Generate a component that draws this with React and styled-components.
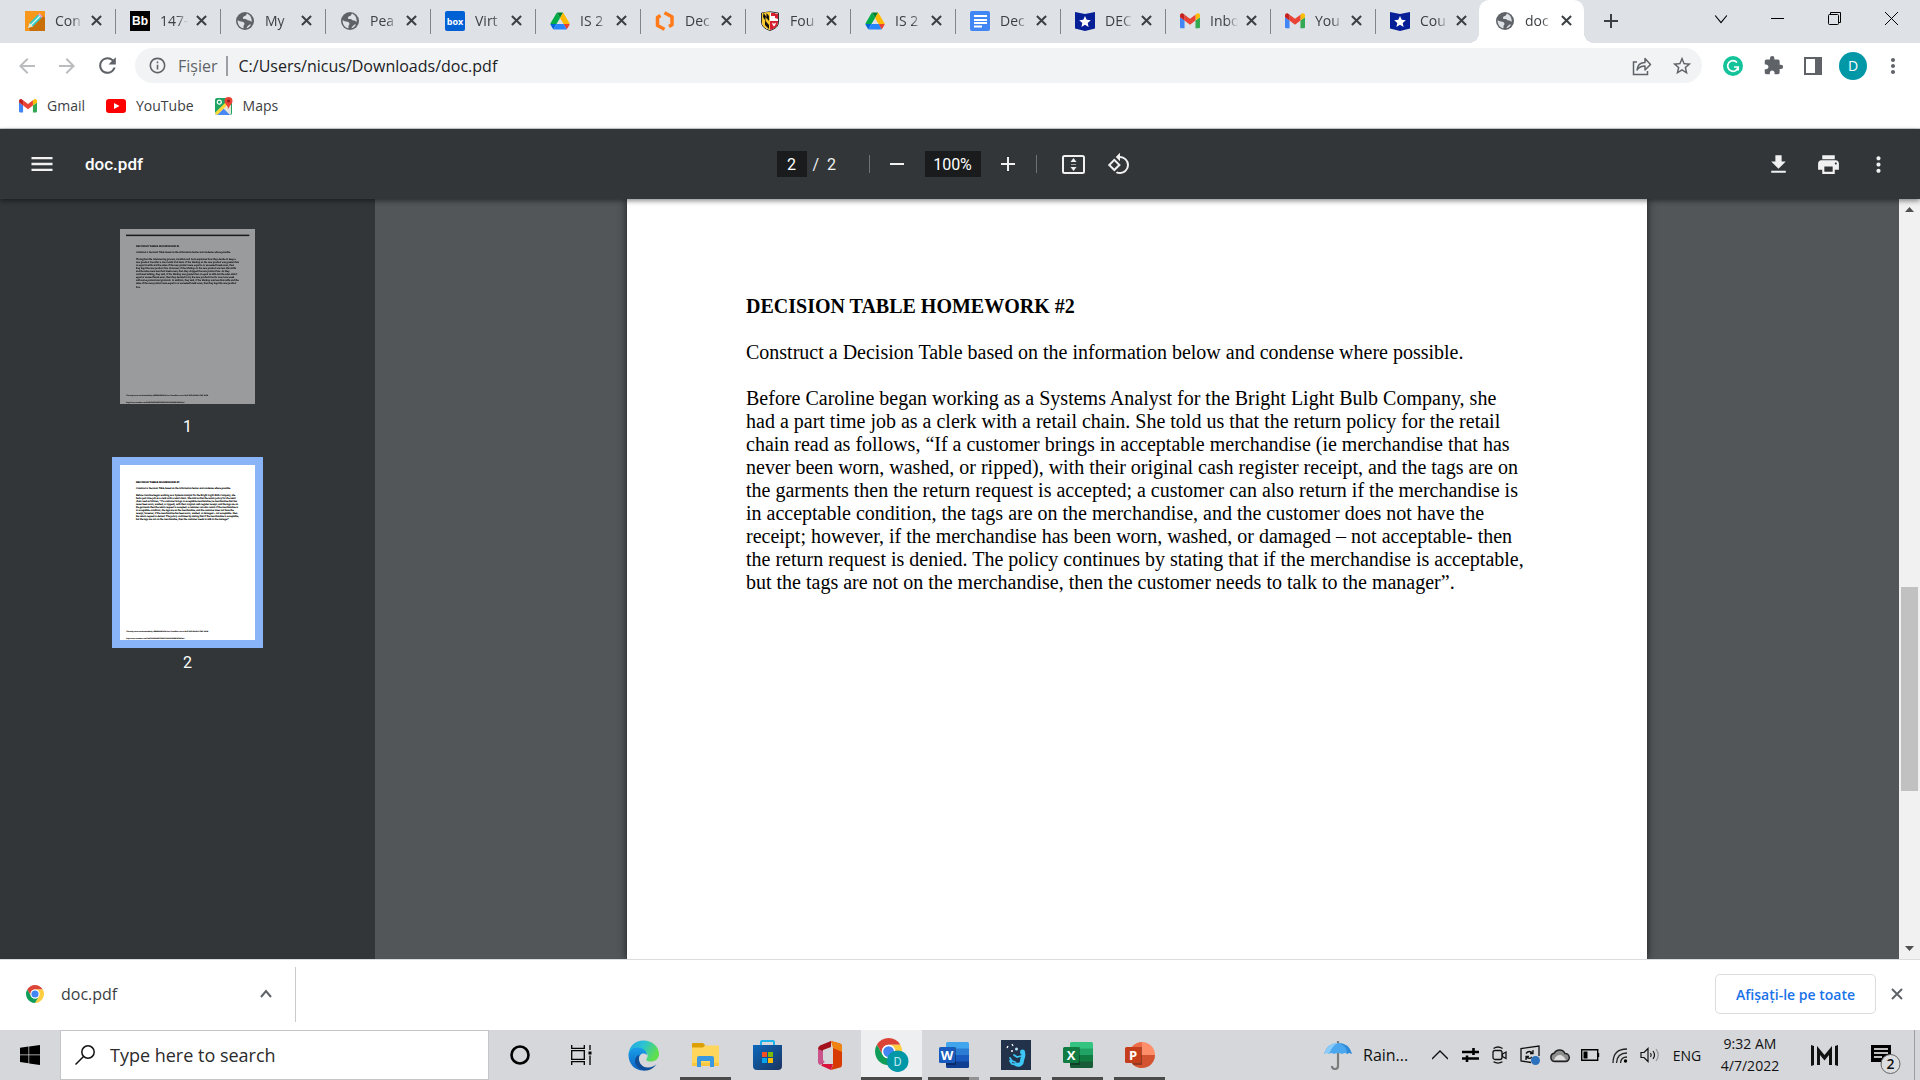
import React, { useState } from "react";
import styled, { createGlobalStyle, css } from "styled-components";
import {
    MdAdd,
    MdArrowBack,
    MdArrowForward,
    MdExtension,
    MdFileDownload,
    MdInfoOutline,
    MdMenu,
    MdMoreVert,
    MdPrint,
    MdRefresh,
    MdRemove,
    MdRotate90DegreesCcw,
    MdStarBorder,
} from "react-icons/md";

const GlobalStyle = createGlobalStyle`
    * {
        box-sizing: border-box;
    }

    body {
        margin: 0;
        font-family: "Open Sans", "Noto Sans", sans-serif;
        color: #3c4043;
    }

    button, input {
        margin: 0;
        padding: 0;
        border: 0;
        background: none;
        font: inherit;
        color: inherit;
        outline: none;
    }

    svg {
        display: block;
        flex: none;
    }
`

const Screen = styled.div`
    display: flex;
    flex-direction: column;
    height: 100vh;
    overflow: hidden;
    background: #fff;
`

/* ---------- tabs ---------- */

const TabStrip = styled.div`
    display: flex;
    height: 43px;
    padding-left: 11px;
    background: #dee1e6;
`

const Tab = styled.div`
    position: relative;
    display: flex;
    align-items: center;
    flex: 0 1 105px;
    min-width: 0;
    padding: 0 0 2px 14px;

    ${p => p.$divided && css`
        &::after {
            content: "";
            position: absolute;
            right: 0;
            top: 9px;
            width: 1px;
            height: 25px;
            background: #80868b;
        }
    `}

    ${p => p.$active && css`
        margin-left: -2px;
        padding-left: 16px;
        background: #fff;
        border-radius: 10px 10px 0 0;

        &::before, &::after {
            content: "";
            position: absolute;
            bottom: 0;
            width: 10px;
            height: 10px;
        }

        &::before {
            left: -10px;
            background: radial-gradient(circle at 0 0, transparent 10px, #fff 10px);
        }

        &::after {
            right: -10px;
            background: radial-gradient(circle at 100% 0, transparent 10px, #fff 10px);
        }
    `}
`

const TabTitle = styled.span`
    width: 28px;
    margin-left: 10px;
    overflow: hidden;
    white-space: nowrap;
    font-size: 14px;
    line-height: 20px;
    mask-image: linear-gradient(to right, #000 60%, transparent);
`

const IconButton = styled.button`
    display: flex;
    align-items: center;
    justify-content: center;
    flex: none;
    width: ${p => p.$width || 40}px;
    height: ${p => p.$height || 35}px;
    color: ${p => p.$color || "#5f6368"};
`

const Spacer = styled.div`
    flex: 1;
`

/* ---------- address and bookmarks ---------- */

const AddressBar = styled.div`
    display: flex;
    align-items: center;
    height: 45px;
    padding: 0 7px;
`

const Omnibox = styled.label`
    display: flex;
    align-items: center;
    flex: 1;
    height: 35px;
    margin: 0 11px 0 8px;
    padding-left: 13px;
    border-radius: 18px;
    background: #f1f3f4;
    font-size: 16px;
    color: #5f6368;
`

const Scheme = styled.span`
    margin-left: 11px;
    padding-right: 9px;
    border-right: 2px solid #9aa0a6;
    line-height: 20px;
`

const UrlInput = styled.input`
    flex: 1;
    padding-left: 10px;
    color: #202124;
`

const Avatar = styled.span`
    display: flex;
    align-items: center;
    justify-content: center;
    width: 28px;
    height: 28px;
    border-radius: 50%;
    background: #0097a7;
    color: #fff;
    font-size: 14px;
`

const Bookmarks = styled.nav`
    display: flex;
    align-items: center;
    gap: 21px;
    height: 41px;
    padding: 0 0 5px 19px;
    border-bottom: 1px solid #d0d0d0;
`

const Bookmark = styled.a`
    display: flex;
    align-items: center;
    gap: 10px;
    color: #3c4043;
    font-size: 14px;
    text-decoration: none;
`

/* ---------- pdf viewer ---------- */

const PdfToolbar = styled.header`
    position: relative;
    z-index: 1;
    display: grid;
    grid-template-columns: 1fr auto 1fr;
    align-items: center;
    height: 70px;
    padding: 0 17px 0 22px;
    background: #323639;
    box-shadow: 0 2px 5px rgba(0, 0, 0, 0.45);
    color: #f1f1f1;
    font-family: Roboto, sans-serif;
    font-size: 16px;
`

const ToolGroup = styled.div`
    display: flex;
    align-items: center;
    justify-content: ${p => p.$align || "flex-start"};
    padding-right: ${p => p.$end || 0}px;
`

const FileName = styled.h1`
    margin: 0 0 0 23px;
    color: #fff;
    font-size: 17px;
    font-weight: 500;
`

const ToolInput = styled.input`
    width: ${p => p.$width}px;
    height: 26px;
    background: #191b1c;
    color: #fff;
    text-align: center;
`

const PageCount = styled.span`
    width: 62px;
    padding-left: 6px;
    white-space: pre;
`

const ToolDivider = styled.span`
    width: 1px;
    height: 18px;
    margin-right: ${p => p.$gap || 0}px;
    background: #6e7275;
`

const Viewer = styled.main`
    display: flex;
    flex: 1;
    min-height: 0;
    background: #525659;
`

const Sidebar = styled.aside`
    display: flex;
    flex-direction: column;
    align-items: center;
    flex: none;
    width: 375px;
    padding-top: 22px;
    background: #323639;
    color: #fff;
    font-family: Roboto, sans-serif;
    font-size: 16px;
`

const Thumb = styled.button`
    width: 151px;
    padding: 8px;
    background: ${p => p.$selected ? "#8ab4f8" : "transparent"};

    svg {
        width: 135px;
        height: 175px;
        background: #fff;
        opacity: ${p => p.$selected ? 1 : 0.5};
    }
`

const ThumbLabel = styled.span`
    margin: 5px 0 20px;
    line-height: 20px;
`

const Canvas = styled.section`
    display: flex;
    flex: 1;
    justify-content: center;
    min-width: 0;
    overflow: hidden;
`

const Page = styled.article`
    width: 1020px;
    padding: 96px 121px 0 119px;
    background: #fff;
    box-shadow: 0 0 8px rgba(0, 0, 0, 0.7);
    color: #000;
    font-family: "Liberation Serif", serif;
    font-size: 20px;
    line-height: 23px;

    h2, p {
        margin: 0 0 23px;
        font-size: inherit;
    }
`

const Scrollbar = styled.div`
    display: flex;
    flex-direction: column;
    align-items: center;
    width: 21px;
    background: #f1f1f1;
`

const Arrow = styled.button`
    display: flex;
    align-items: center;
    justify-content: center;
    width: 21px;
    height: 21px;
`

const Track = styled.div`
    flex: ${p => p.$grow};
`

const ScrollThumb = styled.div`
    flex: 204;
    width: 17px;
    background: #c1c1c1;
`

/* ---------- downloads ---------- */

const DownloadShelf = styled.footer`
    display: flex;
    align-items: center;
    height: 71px;
    padding: 0 8px 2px 0;
    border-top: 1px solid #dadce0;
    background: #fff;
`

const DownloadItem = styled.div`
    display: flex;
    align-items: center;
    width: 296px;
    height: 55px;
    padding: 0 14px 0 26px;
    border-right: 1px solid #c8cacd;
    font-size: 16px;

    span {
        margin-left: 17px;
    }
`

const ShowAll = styled.button`
    height: 40px;
    margin-right: 6px;
    padding: 0 20px;
    border: 1px solid #dadce0;
    border-radius: 5px;
    color: #1a73e8;
    font-size: 14px;
    font-weight: 600;
`

/* ---------- taskbar ---------- */

const Taskbar = styled.div`
    display: flex;
    height: 50px;
    background: #d5d7da;
    color: #111;
`

const SearchBox = styled.label`
    display: flex;
    align-items: center;
    width: 429px;
    padding-left: 14px;
    border: 1px solid #c4c5c7;
    background: #fff;
    font-size: 18px;

    input {
        flex: 1;
        min-width: 0;
        margin-left: 15px;
    }

    input::placeholder {
        color: #2b2b2b;
        opacity: 1;
    }
`

const Apps = styled.div`
    display: flex;
    gap: 1px;
`

const AppButton = styled.button`
    display: flex;
    align-items: center;
    justify-content: center;
    width: 61px;
    height: 50px;
    background: ${p => p.$active ? "#eeeff1" : "none"};
    position: relative;

    ${p => p.$open && css`
        &::after {
            content: "";
            position: absolute;
            left: ${p.$active ? 0 : 5}px;
            right: ${p.$active ? 0 : 5}px;
            bottom: 0;
            height: 3px;
            background: ${p.$stacked ? "linear-gradient(to right, #4a4a4a 80%, #929292 80%)" : "#4a4a4a"};
        }
    `}
`

const Weather = styled.button`
    display: flex;
    align-items: center;
    gap: 11px;
    width: 101px;
    font-size: 16px;
`

const Lang = styled.button`
    width: 44px;
    font-size: 14px;
`

const Clock = styled.button`
    display: flex;
    flex-direction: column;
    align-items: center;
    justify-content: center;
    width: 82px;
    font-size: 14px;
    line-height: 22px;
`

const ShowDesktop = styled.button`
    width: 6px;
    border-left: 1px solid #9b9da0;
`

/* ---------- icons ---------- */

const GmailIcon = ({ size = 18 }) => (
    <svg width={size} height={size} viewBox="52 38 88 76">
        <path fill="#4285f4" d="M58 108h14V74L52 59v43c0 3.32 2.69 6 6 6" />
        <path fill="#34a853" d="M120 108h14c3.32 0 6-2.69 6-6V59l-20 15" />
        <path fill="#fbbc04" d="M120 48v26l20-15v-8c0-7.42-8.47-11.65-14.4-7.2" />
        <path fill="#ea4335" d="M72 74V48l24 18 24-18v26L96 92" />
        <path fill="#c5221f" d="M52 51v8l20 15V48l-5.6-4.2c-5.94-4.45-14.4-.22-14.4 7.2" />
    </svg>
)

const DriveIcon = () => (
    <svg width="20" height="20" viewBox="-2 -4 91 86">
        <path fill="#0066da" d="m6.6 66.85 3.85 6.65c.8 1.4 1.95 2.5 3.3 3.3l13.75-23.8h-27.5c0 1.55.4 3.1 1.2 4.5z" />
        <path fill="#00ac47" d="m43.65 25-13.75-23.8c-1.35.8-2.5 1.9-3.3 3.3l-25.4 44a9.06 9.06 0 0 0-1.2 4.5h27.5z" />
        <path fill="#ea4335" d="m73.55 76.8c1.35-.8 2.5-1.9 3.3-3.3l1.6-2.75 7.65-13.25c.8-1.4 1.2-2.95 1.2-4.5h-27.5l5.85 11.5z" />
        <path fill="#00832d" d="m43.65 25 13.75-23.8c-1.35-.8-2.9-1.2-4.5-1.2h-18.5c-1.6 0-3.15.45-4.5 1.2z" />
        <path fill="#2684fc" d="m59.8 53h-32.3l-13.75 23.8c1.35.8 2.9 1.2 4.5 1.2h50.8c1.6 0 3.15-.45 4.5-1.2z" />
        <path fill="#ffba00" d="m73.4 26.5-12.7-22c-.8-1.4-1.95-2.5-3.3-3.3l-13.75 23.8 16.15 28h27.45c0-1.55-.4-3.1-1.2-4.5z" />
    </svg>
)

const PencilIcon = () => (
    <svg width="20" height="20" viewBox="0 0 20 20">
        <rect width="20" height="20" fill="#f7981d" />
        <path d="M17 4l3 3v13H5l-1-3z" fill="#c96f08" />
        <path d="M3 17l1.5-5L13 3.5l3.5 3.5L8 15.5z" fill="#35c9c0" />
        <path d="M6 14L15 5" stroke="#d8fff9" strokeWidth="1.2" />
        <path d="M13 3.5l1.5-1.3 3.3 3.3L16.5 7z" fill="#e9a3d6" />
        <path d="M3 17l1.5-5L8 15.5z" fill="#fbe3bd" />
    </svg>
)

const BlackboardIcon = () => (
    <svg width="20" height="20" viewBox="0 0 20 20">
        <rect width="20" height="20" fill="#000" />
        <text x="10" y="14" textAnchor="middle" fill="#fff" fontFamily="Liberation Sans" fontWeight="bold" fontSize="12">Bb</text>
    </svg>
)

const BoxIcon = () => (
    <svg width="20" height="20" viewBox="0 0 20 20">
        <rect width="20" height="20" rx="2" fill="#0061d5" />
        <text x="10" y="14" textAnchor="middle" fill="#fff" fontFamily="Open Sans" fontWeight="bold" fontSize="9">box</text>
    </svg>
)

const HexIcon = () => (
    <svg width="20" height="20" viewBox="0 0 20 20" fill="none" stroke="#ff7a1a" strokeWidth="3.5" strokeLinejoin="round">
        <path d="M5.5 4.5L2.5 6.5v8l7 3.7" />
        <path d="M9.5 1.8l7.5 4v8l-3 1.7" />
    </svg>
)

const ShieldIcon = () => (
    <svg width="20" height="20" viewBox="0 0 20 20">
        <path d="M1.5 2Q10-.5 18.5 2v9q0 6-8.5 8.500Q1.5 17 1.5 11z" fill="#fff" stroke="#333" />
        <path d="M2 2.3Q6 1 10 1v18Q2 16.5 2 11z" fill="#f8c82d" />
        <path d="M3.5 2l3 4V2L9 5v5L5.5 6v4L9 14v4l-4-4V9L3 6z" fill="#111" />
        <path d="M10 10h8v1q0 6-8 8zM11 2h4v3h-4z" fill="#d6202f" />
        <path d="M15 2.5l3 .5v5l-3-1z" fill="#d6202f" />
        <path d="M12 11.5q2 2 4 0-.5 3-2 4-1.500-1-2-4z" fill="#fff" />
    </svg>
)

const DocsIcon = () => (
    <svg width="20" height="20" viewBox="0 0 20 20">
        <rect width="20" height="20" rx="2" fill="#4285f4" />
        <path d="M4 5h13M4 9h13M4 12h13M4 15.5h8" stroke="#fff" strokeWidth="1.8" />
    </svg>
)

const StarFlagIcon = () => (
    <svg width="20" height="20" viewBox="0 0 20 20">
        <path d="M0 1l10 2 10-2v16.500L10 20 0 17.500z" fill="#061f97" />
        <path d="M10 5l1.700 3.800 4.100.400-3.100 2.700.900 4L10 13.800 6.400 15.900l.900-4-3.100-2.700 4.100-.400z" fill="#fff" />
    </svg>
)

const GlobeIcon = () => (
    <svg width="20" height="20" viewBox="0 0 20 20">
        <circle cx="10" cy="10" r="9" fill="#5f6368" />
        <path d="M12 2.500c-1 1-.500 2-2 2.500s-2 .500-2 2c0 1.300 1 1 2.500 1s1.500 1.500 3 1.500 2 .500 3.300 1.500c0-4-1.300-7-4.800-8.500z" fill="#dee1e6" />
        <path d="M2.700 9c1 1.500 3 1.500 4.500 1.800s2.300 1.200 2.300 2.200-1 1-1 2v2.300C4.500 16.500 2.300 13 2.700 9z" fill="#dee1e6" />
        <path d="M11.500 17.200c.200-1.700 1.500-1.700 2-2.700.500-1.200 1.500-1 2.500-1-1 2-2.500 3.300-4.500 3.700z" fill="#dee1e6" />
    </svg>
)

const CloseIcon = ({ size = 11, weight = 2.2 }) => (
    <svg width={size} height={size} viewBox="0 0 12 12" fill="none" stroke="currentColor" strokeWidth={weight}>
        <path d="M1 1l10 10M11 1L1 11" />
    </svg>
)

const YouTubeIcon = () => (
    <svg width="20" height="20" viewBox="0 0 20 20">
        <rect y="3" width="20" height="14" rx="3" fill="#f00" />
        <path d="M8 7l5.5 3L8 13z" fill="#fff" />
    </svg>
)

const MapsIcon = () => (
    <svg width="18" height="18" viewBox="0 0 18 18">
        <rect y="1" width="17" height="17" rx="2" fill="#1ea362" />
        <path d="M0 16L16 1v15q0 2-2 2H2q-2 0-2-2z" fill="#e8e4da" />
        <path d="M2 18l6.5-6.5L15 18z" fill="#4a89f3" />
        <path d="M0 16L13 3l2 2L2.5 17.800Q.5 17.800 0 16z" fill="#fdd835" />
        <circle cx="4.3" cy="5.2" r="2" fill="none" stroke="#fff" strokeWidth="1.2" />
        <path d="M13.5 0a4 4 0 0 1 4 4c0 3-3 4-4 8-1-4-4-5-4-8a4 4 0 0 1 4-4z" fill="#ea4335" />
        <circle cx="13.5" cy="4" r="1.4" fill="#8c1d18" />
    </svg>
)

const ChromeIcon = ({ size = 18, badge }) => (
    <svg width={size} height={size} viewBox={badge ? "0 0 60 60" : "0 0 48 48"}>
        <path fill="#db4437" d="M24 12h20.780A24 24 0 0 0 3.220 12l10.390 18A12 12 0 0 1 24 12z" />
        <path fill="#ffcd40" d="M34.390 30L24 48a24 24 0 0 0 20.780-36H24a12 12 0 0 1 10.390 18z" />
        <path fill="#0f9d58" d="M13.610 30L3.220 12A24 24 0 0 0 24 48l10.390-18a12 12 0 0 1-20.780 0z" />
        <circle cx="24" cy="24" r="12" fill="#fff" />
        <circle cx="24" cy="24" r="9.5" fill="#4285f4" />
        {badge && <circle cx="40" cy="41" r="19" fill="#0097a7" />}
        {badge && <text x="40" y="49" textAnchor="middle" fill="#b9e8ee" fontFamily="Roboto" fontSize="22">{badge}</text>}
    </svg>
)

const ShareIcon = () => (
    <svg width="20" height="20" viewBox="0 0 20 20" fill="none" stroke="#5f6368" strokeWidth="1.5">
        <path d="M5 6H1.5v12.5h14V15" />
        <path d="M5 14c.5-5 3-7.500 8-7.500V2.500l5.500 6-5.500 5.500v-4c-4 0-6 1-8 4z" strokeLinejoin="round" />
    </svg>
)

const GrammarlyIcon = () => (
    <svg width="20" height="20" viewBox="0 0 20 20">
        <circle cx="10" cy="10" r="10" fill="#15c39a" />
        <path d="M14 6.5A5.3 5.3 0 1 0 15.2 11H11M15.2 11v3.5" fill="none" stroke="#fff" strokeWidth="1.7" />
    </svg>
)

const SidePanelIcon = () => (
    <svg width="18" height="18" viewBox="0 0 18 18">
        <path d="M1 1h16v16H1z" fill="none" stroke="#5f6368" strokeWidth="2" />
        <path d="M11 1h6v16h-6z" fill="#5f6368" />
    </svg>
)

const FitIcon = () => (
    <svg width="23" height="19" viewBox="0 0 23 19">
        <rect x="1" y="1" width="21" height="17" rx="1.5" fill="none" stroke="#f1f1f1" strokeWidth="2" />
        <path d="M11.5 3l3 4h-6zM11.5 16l3-4h-6z" fill="#f1f1f1" />
        <path d="M9 9.5h5" stroke="#9a9c9e" />
    </svg>
)

const ChevronIcon = ({ down, size = 12, weight = 2 }) => (
    <svg width={size} height={size} viewBox="0 0 12 12" fill="none" stroke="currentColor" strokeWidth={weight}>
        <path d={down ? "M1 3l5 6 5-6" : "M1 9l5-6 5 6"} />
    </svg>
)

const TriangleIcon = ({ down }) => (
    <svg width="9" height="5" viewBox="0 0 9 5">
        <path d={down ? "M0 0h9L4.5 5z" : "M0 5h9L4.5 0z"} fill="#505050" />
    </svg>
)

const MinimizeIcon = () => (
    <svg width="13" height="13" viewBox="0 0 13 13"><path d="M0 6.5h13" stroke="#000" /></svg>
)

const RestoreIcon = () => (
    <svg width="13" height="13" viewBox="0 0 13 13" fill="none" stroke="#000">
        <rect x=".5" y="2.5" width="10" height="10" rx="1" />
        <path d="M2.5 2.5v-2h10v10h-2" />
    </svg>
)

const CloseWindowIcon = () => (
    <svg width="13" height="13" viewBox="0 0 13 13"><path d="M0 0l13 13M13 0L0 13" stroke="#000" /></svg>
)

const WindowsIcon = () => (
    <svg width="20" height="20" viewBox="0 0 20 20">
        <path d="M0 2.800l8.500-1.200v8H0zM9.200 1.500L20 0v9.600H9.200zM0 10.300h8.500v8L0 17.100zM9.200 10.300H20V20L9.200 18.400z" fill="#000" />
    </svg>
)

const SearchIcon = () => (
    <svg width="20" height="20" viewBox="0 0 20 20" fill="none" stroke="#111" strokeWidth="1.5">
        <circle cx="13" cy="7" r="6.2" />
        <path d="M8.5 11.5L.5 19.5" />
    </svg>
)

const CortanaIcon = () => (
    <svg width="20" height="20" viewBox="0 0 20 20"><circle cx="10" cy="10" r="8.5" fill="none" stroke="#000" strokeWidth="2.6" /></svg>
)

const TaskViewIcon = () => (
    <svg width="21" height="20" viewBox="0 0 21 20" fill="none" stroke="#000" strokeWidth="1.3">
        <path d="M.7 0v3.300h12.600V0M.7 20v-3.300h12.600V20M.7 5.700h12.600v8.600H.7zM19 0v5M19 10.5V20" />
        <path d="M17.5 6.5h3v3h-3z" fill="#000" stroke="none" />
    </svg>
)

const EdgeIcon = () => (
    <svg width="31" height="31" viewBox="0 0 31 31">
        <defs>
            <linearGradient id="edgeTop" x1="0" y1="0" x2="1" y2="0.4">
                <stop offset="0" stopColor="#1fa5e8" />
                <stop offset="0.5" stopColor="#2bc3d2" />
                <stop offset="1" stopColor="#5fdf4e" />
            </linearGradient>
            <linearGradient id="edgeSide" x1="0" y1="0" x2="0" y2="1">
                <stop offset="0" stopColor="#1a9fe8" />
                <stop offset="1" stopColor="#0b62c4" />
            </linearGradient>
        </defs>
        <path d="M.5 15C1 6 7 .5 15.500.5 25 .5 31 7 31 14c0 5-4 7.500-8.500 7.500-3 0-5-1.200-4-2.500 2.500-3 1-8.500-5-8.500C7 8 2 10 .5 15z" fill="url(#edgeTop)" />
        <path d="M.5 15C1 10 5.5 7 10 7.500c5 .5 9 3.500 9 7.500-3-3-8-1.500-8 4 0 6 5 9.500 10 9.500-2 1.500-4 2-6 2C7 30.500.5 24 .5 15z" fill="url(#edgeSide)" />
        <path d="M11.5 14.5C9 21 13 27.500 20 27.500c3.500 0 6.500-1.500 8.500-3.500-3 5-8 6.800-12 6.500-6-.5-10-5.500-9.500-10 .3-3 2-5 4.500-6z" fill="#104f97" />
    </svg>
)

const FolderIcon = () => (
    <svg width="27" height="24" viewBox="0 0 27 24">
        <path d="M0 1q0-1 1-1h10l2 2v3H0z" fill="#dc9f06" />
        <path d="M0 4.5h11l2-2h13q1 0 1 1V22q0 1-1 1H1q-1 0-1-1z" fill="#ffd65c" />
        <path d="M0 20h27v2q0 1-1 1H1q-1 0-1-1z" fill="#f8c63f" />
        <path d="M5 24V15q0-2 2-2h13q2 0 2 2v9h-4v-6H9v6z" fill="#3a98e0" />
    </svg>
)

const StoreIcon = () => (
    <svg width="29" height="30" viewBox="0 0 29 30">
        <defs>
            <linearGradient id="store" x1="0" y1="0" x2="1" y2="1">
                <stop offset="0" stopColor="#0b68bd" />
                <stop offset="1" stopColor="#1c345f" />
            </linearGradient>
        </defs>
        <path d="M8 6V2q0-1 1-1h11q1 0 1 1v4" fill="none" stroke="#1cb4ee" strokeWidth="2" />
        <path d="M0 5h29v21q0 4-4 4H4q-4 0-4-4z" fill="url(#store)" />
        <path d="M9 12h5v5H9z" fill="#f25022" />
        <path d="M15 12h5v5h-5z" fill="#7fba00" />
        <path d="M9 18h5v5H9z" fill="#00a4ef" />
        <path d="M15 18h5v5h-5z" fill="#ffb900" />
    </svg>
)

const OfficeIcon = () => (
    <svg width="24" height="29" viewBox="0 0 24 29">
        <path d="M13 0L2 4.500Q0 5.500 0 8v13l5 2.500V9l8-3z" fill="#a3121c" />
        <path d="M0 8v13q0 2 2 3l5-3q-2-.5-2-3V10z" fill="#c9538a" />
        <path d="M13 0l9 2.500q2 .5 2 3v18q0 2.500-2 3L13 29l2-5V5z" fill="#d83b01" />
        <path d="M13 0l9 2.500q2 .5 2 3V11l-9-4z" fill="#ef8412" />
        <path d="M5 23h10l-2 6-9-4q-2-1 1-2z" fill="#d9143c" />
    </svg>
)

const OfficeAppIcon = ({ letter, tile, bands, round }) => (
    <svg width="30" height="26" viewBox="0 0 30 26">
        <defs>
            <clipPath id={`band${letter}`}>
                {round ? <circle cx="17" cy="13" r="13" /> : <rect x="7" width="23" height="26" rx="1.5" />}
            </clipPath>
        </defs>
        <g clipPath={`url(#band${letter})`}>
            {round ? (
                <>
                    <path d="M0 0h17v26H0z" fill={bands[0]} />
                    <path d="M17 0h13v13H17z" fill={bands[1]} />
                    <path d="M4 13h26v13H4z" fill={bands[2]} />
                </>
            ) : bands.map((band, i) => (
                <rect key={band} x="7" y={i * 6.5} width="23" height="7" fill={band} />
            ))}
            <rect x="7" y="5" width="10" height="18" opacity="0.3" />
        </g>
        <rect y="5" width="16" height="16" rx="1.5" fill={tile} />
        <text x="8" y="18" textAnchor="middle" fill="#fff" fontFamily="Open Sans" fontWeight="bold" fontSize="13">{letter}</text>
    </svg>
)

const DiverIcon = () => (
    <svg width="30" height="30" viewBox="0 0 30 30">
        <rect width="30" height="30" fill="#22324a" />
        <circle cx="21.500" cy="12" r="2.500" fill="#3cc5f5" />
        <path d="M22 13c1.500 3-1 5-1 8 0 3-3 4.500-5.500 3.500" fill="none" stroke="#3cc5f5" strokeWidth="4" strokeLinecap="round" />
        <path d="M15 24.500l-4-.500-2-3M14 22l-3-1-2-3M20 16l-4 1-3-2" fill="none" stroke="#3cc5f5" strokeWidth="1.800" strokeLinecap="round" />
        <path d="M6 8l1-2M11 4l1 2M10 11h2" stroke="#fff" strokeWidth="1.3" />
        <circle cx="15.5" cy="9" r="1.5" fill="#b8e6f7" />
    </svg>
)

const UmbrellaIcon = () => (
    <svg width="28" height="29" viewBox="0 0 28 29">
        <path d="M14 0v25q0 3-3 3t-3-3" fill="none" stroke="#7c7c7c" strokeWidth="2.2" />
        <path d="M0 13Q3 2 14 2t14 11q-3-2-5 0-2-2-5 0-4-2-8 0-3-2-5 0-2-2-5 0z" fill="#4ba7ee" />
        <path d="M0 13Q3 2 14 2 8 5 5 13q-2-2-5 0z" fill="#8bcbfa" />
        <path d="M14 2q9 2 9 11 2-2 5 0Q25 2 14 2z" fill="#2f8ad8" />
    </svg>
)

const trayIcons = {
    "Show hidden icons": (
        <svg width="16" height="10" viewBox="0 0 16 10" fill="none" stroke="#111" strokeWidth="1.4"><path d="M0 9l8-8 8 8" /></svg>
    ),
    Mixer: (
        <svg width="17" height="14" viewBox="0 0 17 14" fill="none" stroke="#000" strokeWidth="2.6">
            <path d="M0 4h17M11.5 0v7M0 10.5h17M5 7.5v6.5" />
        </svg>
    ),
    "Meet now": (
        <svg width="16" height="18" viewBox="0 0 16 18" fill="none" stroke="#111" strokeWidth="1.3">
            <rect x="1" y="4.500" width="9" height="9" rx="2" />
            <path d="M10.5 8l3.500-2v6.500l-3.500-2zM1.500 2.500q4.500-3 9 0M1.500 15.800q4.500 2.500 9 0" />
        </svg>
    ),
    Updates: (
        <svg width="20" height="20" viewBox="0 0 20 20" fill="none" stroke="#111" strokeWidth="1.3">
            <path d="M11 17.500L1 16V3.500L19 1v10" />
            <path d="M6 8.500q3-4 7 0M13 5v3.500h-3M12 12q-3 3-6-.5M6 15v-3.500h3" />
            <circle cx="15.5" cy="15.5" r="4.5" fill="#2b71bd" stroke="none" />
        </svg>
    ),
    OneDrive: (
        <svg width="20" height="15" viewBox="0 0 20 15">
            <path d="M5 13.5a4.200 4.200 0 0 1-.8-8.300A6 6 0 0 1 15 5.500a4 4 0 0 1 .5 8z" fill="#8f8f8f" stroke="#222" strokeWidth="1.5" />
            <path d="M4 12q2-5 6-5 3 0 6 5z" fill="#dedede" />
        </svg>
    ),
    Battery: (
        <svg width="19" height="12" viewBox="0 0 19 12">
            <path d="M.7.7h16v10.600H.7zM17.5 4v4" fill="none" stroke="#000" strokeWidth="1.4" />
            <path d="M2.500 2.500h4v7h-4z" />
        </svg>
    ),
    Network: (
        <svg width="17" height="17" viewBox="0 0 17 17" fill="none" stroke="#222" strokeWidth="1.3">
            <path d="M1 16Q1 2 15 2M4.500 16Q5 6 15 6M8.500 16Q9 10 15 10" />
            <circle cx="13.5" cy="14" r="1.7" fill="#000" stroke="none" />
        </svg>
    ),
    Volume: (
        <svg width="20" height="16" viewBox="0 0 20 16" fill="none" stroke="#111" strokeWidth="1.2">
            <path d="M1 5.500h3l4-4v13l-4-4H1zM10.500 6q1.500 2 0 4M13 4q3 4 0 8" />
            <path d="M16 2q4.500 6 0 12" stroke="#929292" />
        </svg>
    ),
}

const MonitorAppIcon = () => (
    <svg width="27" height="23" viewBox="0 0 27 23">
        <path d="M0 1l3 1v19l-3 1zM6 21V2l7.500 9L21 2v19h-3v-10l-4.500 5.500L9 11v10zM24 2l3-1v21l-3-1z" fill="#111" />
    </svg>
)

const NotificationsIcon = () => (
    <svg width="30" height="38" viewBox="0 -8 30 38">
        <path d="M0 1h20v17h-6l-4 3v-3H0z" fill="#000" />
        <path d="M3 5h14M3 9h14M3 13h8" stroke="#fff" strokeWidth="1.5" />
        <circle cx="19.500" cy="20" r="9.5" fill="#dcdddf" stroke="#666" />
        <text x="19.500" y="25" textAnchor="middle" fill="#111" fontFamily="Open Sans" fontWeight="600" fontSize="14">2</text>
    </svg>
)

/* ---------- data ---------- */

const tabs = [
    { title: "Con", Icon: PencilIcon },
    { title: "147-", Icon: BlackboardIcon },
    { title: "My", Icon: GlobeIcon },
    { title: "Pea", Icon: GlobeIcon },
    { title: "Virt", Icon: BoxIcon },
    { title: "IS 2", Icon: DriveIcon },
    { title: "Dec", Icon: HexIcon },
    { title: "Fou", Icon: ShieldIcon },
    { title: "IS 2", Icon: DriveIcon },
    { title: "Dec", Icon: DocsIcon },
    { title: "DEC", Icon: StarFlagIcon },
    { title: "Inbo", Icon: () => <GmailIcon size={20} /> },
    { title: "You", Icon: () => <GmailIcon size={20} /> },
    { title: "Cou", Icon: StarFlagIcon },
    { title: "doc", Icon: GlobeIcon },
]

const apps = [
    { name: "Cortana", icon: <CortanaIcon /> },
    { name: "Task View", icon: <TaskViewIcon /> },
    { name: "Edge", icon: <EdgeIcon /> },
    { name: "File Explorer", icon: <FolderIcon />, open: true },
    { name: "Store", icon: <StoreIcon /> },
    { name: "Office", icon: <OfficeIcon /> },
    { name: "Chrome", icon: <ChromeIcon size={34} badge="D" />, open: true, active: true },
    { name: "Word", icon: <OfficeAppIcon letter="W" tile="#185abd" bands={["#41a5ee", "#2b7cd3", "#185abd", "#103f91"]} />, open: true, stacked: true },
    { name: "Diver", icon: <DiverIcon />, open: true },
    { name: "Excel", icon: <OfficeAppIcon letter="X" tile="#107c41" bands={["#33c481", "#21a366", "#107c41", "#185c37"]} />, open: true },
    { name: "PowerPoint", icon: <OfficeAppIcon letter="P" tile="#c43e1c" bands={["#ed6c47", "#ff8f6b", "#d35230"]} round />, open: true },
]

const paragraph = "Before Caroline began working as a Systems Analyst for the Bright Light Bulb Company, she had a part time job as a clerk with a retail chain. She told us that the return policy for the retail chain read as follows, “If a customer brings in acceptable merchandise (ie merchandise that has never been worn, washed, or ripped), with their original cash register receipt, and the tags are on the garments then the return request is accepted; a customer can also return if the merchandise is in acceptable condition, the tags are on the merchandise, and the customer does not have the receipt; however, if the merchandise has been worn, washed, or damaged – not acceptable- then the return request is denied. The policy continues by stating that if the merchandise is acceptable, but the tags are not on the merchandise, then the customer needs to talk to the manager”."

const intro = "Construct a Decision Table based on the information below and condense where possible."

const thumbs = [
    {
        page: 1,
        title: "DECISION TABLE HOMEWORK #1",
        rule: true,
        lines: [
            "Throughout the interviewing process, Jonathan and Anna explained how they decide to keep a",
            "new product line after a one-month trial basis. If the Markup on the new product was greater than",
            "or equal to 50% and the sales of the new product were equal to or exceeded break-even, then",
            "they kept the new product line. However, if the Markup on the new product was less than 50%",
            "and the sales were less than break-even, then they dropped the new product line. As they",
            "continued talking, they said, if the Markup was greater than or equal to 50% but the sales didn’t",
            "equal or exceed break-even, then they decided to try the new product line for one more week",
            "with some promotional gimmick. In addition, they said, if the Markup was less than 50% and the",
            "sales of the new product were equal to or exceeded break-even, then they kept the new product",
            "line.",
        ],
    },
    {
        page: 2,
        title: "DECISION TABLE HOMEWORK #2",
        lines: [
            "Before Caroline began working as a Systems Analyst for the Bright Light Bulb Company, she",
            "had a part time job as a clerk with a retail chain. She told us that the return policy for the retail",
            "chain read as follows, “If a customer brings in acceptable merchandise (ie merchandise that has",
            "never been worn, washed, or ripped), with their original cash register receipt, and the tags are on",
            "the garments then the return request is accepted; a customer can also return if the merchandise is",
            "in acceptable condition, the tags are on the merchandise, and the customer does not have the",
            "receipt; however, if the merchandise has been worn, washed, or damaged – not acceptable- then",
            "the return request is denied. The policy continues by stating that if the merchandise is acceptable,",
            "but the tags are not on the merchandise, then the customer needs to talk to the manager”.",
        ],
    },
]

const PageThumb = ({ title, lines, rule }) => (
    <svg viewBox="0 0 1020 1320" fontFamily="Liberation Serif" fontSize="20" textRendering="geometricPrecision" stroke="#000" strokeWidth="1">
        {rule && <rect x="46" y="42" width="930" height="10" />}
        <text x="120" y="136" fontWeight="bold">{title}</text>
        <text x="120" y="182">{intro}</text>
        {lines.map((line, i) => (
            <text key={line} x="120" y={234 + i * 23}>{line}</text>
        ))}
        <text x="48" y="1261" fontSize="13">This study source was downloaded by 100000835997434 from CourseHero.com on 04-07-2022 08:30:47 GMT -05:00</text>
        <text x="48" y="1314" fontSize="13">https://www.coursehero.com/file/87547659/DECISION-TABLE-HOMEWORKdoc/</text>
    </svg>
)

const App = () => {

    const [url, setUrl] = useState("C:/Users/nicus/Downloads/doc.pdf")
    const [page, setPage] = useState("2")
    const [zoom, setZoom] = useState("100%")

    return (
        <Screen>
            <GlobalStyle />

            <TabStrip>
                {tabs.map(({ title, Icon }, i) => (
                    <Tab key={i} $divided={i < tabs.length - 2} $active={i === tabs.length - 1}>
                        <Icon />
                        <TabTitle>{title}</TabTitle>
                        <IconButton $width={26} $height={24} $color="#3c4043" aria-label="Close tab"><CloseIcon /></IconButton>
                    </Tab>
                ))}
                <IconButton $width={54} $height={42} $color="#3c4043" aria-label="New tab"><MdAdd size={24} /></IconButton>
                <Spacer />
                <IconButton $width={57} $height={37} $color="#000" aria-label="Search tabs"><ChevronIcon down size={14} weight={1} /></IconButton>
                <IconButton $width={57} $height={37} aria-label="Minimize"><MinimizeIcon /></IconButton>
                <IconButton $width={57} $height={37} aria-label="Restore"><RestoreIcon /></IconButton>
                <IconButton $width={57} $height={37} aria-label="Close"><CloseWindowIcon /></IconButton>
            </TabStrip>

            <AddressBar>
                <IconButton $color="#babcbe" aria-label="Back"><MdArrowBack size={24} /></IconButton>
                <IconButton $color="#babcbe" aria-label="Forward"><MdArrowForward size={24} /></IconButton>
                <IconButton aria-label="Reload"><MdRefresh size={25} /></IconButton>
                <Omnibox>
                    <MdInfoOutline size={19} />
                    <Scheme>Fișier</Scheme>
                    <UrlInput aria-label="Address" value={url} onChange={e => setUrl(e.target.value)} />
                    <IconButton aria-label="Share"><ShareIcon /></IconButton>
                    <IconButton aria-label="Bookmark this page"><MdStarBorder size={22} /></IconButton>
                </Omnibox>
                <IconButton aria-label="Grammarly"><GrammarlyIcon /></IconButton>
                <IconButton aria-label="Extensions"><MdExtension size={21} /></IconButton>
                <IconButton aria-label="Side panel"><SidePanelIcon /></IconButton>
                <IconButton aria-label="Profile"><Avatar>D</Avatar></IconButton>
                <IconButton aria-label="Menu"><MdMoreVert size={24} /></IconButton>
            </AddressBar>

            <Bookmarks>
                <Bookmark href="#gmail"><GmailIcon />Gmail</Bookmark>
                <Bookmark href="#youtube"><YouTubeIcon />YouTube</Bookmark>
                <Bookmark href="#maps"><MapsIcon />Maps</Bookmark>
            </Bookmarks>

            <PdfToolbar>
                <ToolGroup>
                    <IconButton $color="#f1f1f1" aria-label="Toggle sidebar"><MdMenu size={28} /></IconButton>
                    <FileName>doc.pdf</FileName>
                </ToolGroup>
                <ToolGroup $end={15}>
                    <ToolInput $width={30} aria-label="Page" value={page} onChange={e => setPage(e.target.value)} />
                    <PageCount>{"/  2"}</PageCount>
                    <ToolDivider />
                    <IconButton $width={55} $color="#f1f1f1" aria-label="Zoom out"><MdRemove size={24} /></IconButton>
                    <ToolInput $width={56} aria-label="Zoom" value={zoom} onChange={e => setZoom(e.target.value)} />
                    <IconButton $width={55} $color="#f1f1f1" aria-label="Zoom in"><MdAdd size={24} /></IconButton>
                    <ToolDivider $gap={7} />
                    <IconButton $width={60} $color="#f1f1f1" aria-label="Fit to page"><FitIcon /></IconButton>
                    <IconButton $width={30} $color="#f1f1f1" aria-label="Rotate"><MdRotate90DegreesCcw size={24} /></IconButton>
                </ToolGroup>
                <ToolGroup $align="flex-end">
                    <IconButton $width={50} $color="#f1f1f1" aria-label="Download"><MdFileDownload size={25} /></IconButton>
                    <IconButton $width={50} $color="#f1f1f1" aria-label="Print"><MdPrint size={25} /></IconButton>
                    <IconButton $width={50} $color="#f1f1f1" aria-label="More"><MdMoreVert size={25} /></IconButton>
                </ToolGroup>
            </PdfToolbar>

            <Viewer>
                <Sidebar>
                    {thumbs.map(thumb => (
                        <React.Fragment key={thumb.page}>
                            <Thumb $selected={page === String(thumb.page)} onClick={() => setPage(String(thumb.page))} aria-label={`Page ${thumb.page}`}>
                                <PageThumb {...thumb} />
                            </Thumb>
                            <ThumbLabel>{thumb.page}</ThumbLabel>
                        </React.Fragment>
                    ))}
                </Sidebar>
                <Canvas>
                    <Page>
                        <h2>DECISION TABLE HOMEWORK #2</h2>
                        <p>{intro}</p>
                        <p>{paragraph}</p>
                    </Page>
                </Canvas>
                <Scrollbar>
                    <Arrow aria-label="Scroll up"><TriangleIcon /></Arrow>
                    <Track $grow={368} />
                    <ScrollThumb />
                    <Track $grow={147} />
                    <Arrow aria-label="Scroll down"><TriangleIcon down /></Arrow>
                </Scrollbar>
            </Viewer>

            <DownloadShelf>
                <DownloadItem>
                    <ChromeIcon />
                    <span>doc.pdf</span>
                    <Spacer />
                    <IconButton $width={30} aria-label="Download options"><ChevronIcon /></IconButton>
                </DownloadItem>
                <Spacer />
                <ShowAll>Afișați-le pe toate</ShowAll>
                <IconButton $width={30} aria-label="Close downloads"><CloseIcon size={12} weight={2} /></IconButton>
            </DownloadShelf>

            <Taskbar>
                <IconButton $width={60} $height={50} aria-label="Start"><WindowsIcon /></IconButton>
                <SearchBox>
                    <SearchIcon />
                    <input placeholder="Type here to search" aria-label="Search" />
                </SearchBox>
                <Apps>
                    {apps.map(app => (
                        <AppButton key={app.name} $open={app.open} $active={app.active} $stacked={app.stacked} aria-label={app.name}>
                            {app.icon}
                        </AppButton>
                    ))}
                </Apps>
                <Spacer />
                <Weather><UmbrellaIcon />Rain...</Weather>
                {Object.entries(trayIcons).map(([name, icon]) => (
                    <IconButton key={name} $width={30} $height={50} aria-label={name}>{icon}</IconButton>
                ))}
                <Lang>ENG</Lang>
                <Clock>
                    <span>9:32 AM</span>
                    <span>4/7/2022</span>
                </Clock>
                <IconButton $width={66} $height={50} aria-label="Monitor"><MonitorAppIcon /></IconButton>
                <IconButton $width={57} $height={50} aria-label="Notifications"><NotificationsIcon /></IconButton>
                <ShowDesktop aria-label="Show desktop" />
            </Taskbar>
        </Screen>
    )
}

export default App;
